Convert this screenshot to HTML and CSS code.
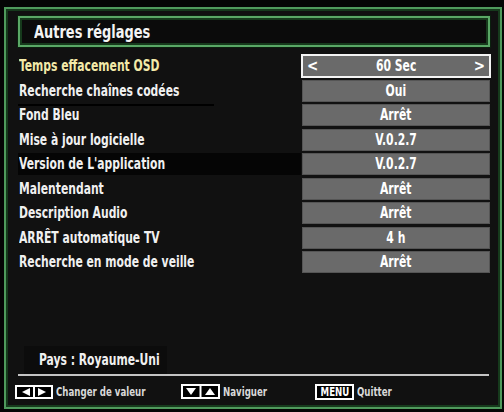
FILE: index.html
```html
<!DOCTYPE html>
<html lang="fr">
<head>
    <meta charset="UTF-8">
    <meta name="viewport" content="width=device-width, initial-scale=1.0">
    <title>Autres réglages</title>
    <link rel="stylesheet" href="styles.css">
</head>
<body>

    <div class="frame">
        <div class="titlebox">
            <h1><span class="sq">Autres réglages</span></h1>
        </div>

        <div class="menu">
            <div class="row active">
                <span class="label"><span class="sq">Temps effacement OSD</span></span>
                <span class="value"><span class="arrow">&lt;</span><span class="sq mid">60 Sec</span><span class="arrow">&gt;</span></span>
            </div>
            <div class="row underline">
                <span class="label"><span class="sq">Recherche chaînes codées</span></span>
                <span class="value"><span class="sq mid">Oui</span></span>
            </div>
            <div class="row">
                <span class="label"><span class="sq">Fond Bleu</span></span>
                <span class="value"><span class="sq mid">Arrêt</span></span>
            </div>
            <div class="row">
                <span class="label"><span class="sq">Mise à jour logicielle</span></span>
                <span class="value"><span class="sq mid">V.0.2.7</span></span>
            </div>
            <div class="row band">
                <span class="label"><span class="sq">Version de L'application</span></span>
                <span class="value"><span class="sq mid">V.0.2.7</span></span>
            </div>
            <div class="row">
                <span class="label"><span class="sq">Malentendant</span></span>
                <span class="value"><span class="sq mid">Arrêt</span></span>
            </div>
            <div class="row">
                <span class="label"><span class="sq">Description Audio</span></span>
                <span class="value"><span class="sq mid">Arrêt</span></span>
            </div>
            <div class="row">
                <span class="label"><span class="sq">ARRÊT automatique TV</span></span>
                <span class="value"><span class="sq mid">4 h</span></span>
            </div>
            <div class="row">
                <span class="label"><span class="sq">Recherche en mode de veille</span></span>
                <span class="value"><span class="sq mid">Arrêt</span></span>
            </div>
        </div>

        <div class="spacer"></div>

        <div class="pays"><span class="sq">Pays : Royaume-Uni</span></div>
        <div class="rule"></div>

        <div class="footer">
            <div class="hint change">
                <svg width="38" height="14" viewBox="0 0 38 14">
                    <rect x="1" y="1" width="36" height="12" fill="#000" stroke="#fff" stroke-width="2"/>
                    <line x1="19" y1="1" x2="19" y2="13" stroke="#fff" stroke-width="2"/>
                    <polygon points="15,3 15,11 7,7" fill="#fff"/>
                    <polygon points="23,3 23,11 31,7" fill="#fff"/>
                </svg>
                <span class="sq">Changer de valeur</span>
            </div>
            <div class="hint nav">
                <svg width="39" height="15" viewBox="0 0 39 15">
                    <rect x="1" y="1" width="37" height="13" fill="#000" stroke="#fff" stroke-width="2"/>
                    <line x1="19.5" y1="1" x2="19.5" y2="14" stroke="#fff" stroke-width="2"/>
                    <polygon points="5,4 15,4 10,11" fill="#fff"/>
                    <polygon points="24,11 34,11 29,4" fill="#fff"/>
                </svg>
                <span class="sq">Naviguer</span>
            </div>
            <div class="hint quit">
                <span class="menukey"><span class="sq mid">MENU</span></span>
                <span class="sq">Quitter</span>
            </div>
        </div>
    </div>

</body>
</html>
```

FILE: styles.css
```css
html,body{
    margin: 0;
    width: 504px;
    height: 412px;
    background-color: #050505;
    overflow: hidden;
}
body{
    font-family: "DejaVu Sans Condensed", "DejaVu Sans", sans-serif;
    font-weight: bold;
    color: #f0f0f0;
}
/* the OSD font is narrow, squeeze the glyphs horizontally */
.sq{
    display: inline-block;
    white-space: nowrap;
    transform: scaleX(0.8);
    transform-origin: left center;
}
.sq.mid{
    transform-origin: center center;
}
.frame{
    box-sizing: border-box;
    margin: 7px 2px 0 4px;
    height: 402px;
    border: 2px solid #4f9a5c;
    box-shadow: inset 0 0 0 2px #163a1c;
    background-color: #111111;
    padding: 7px 10px 0 12px;
    display: flex;
    flex-direction: column;
}
.titlebox{
    box-sizing: border-box;
    height: 31px;
    border: 2px solid #5aa866;
    box-shadow: inset 0 0 0 2px #163a1c, 0 0 0 1px #0b200e;
    background-color: #0b0b0b;
    display: flex;
    align-items: center;
    padding-left: 14px;
}
.titlebox h1{
    margin: 0;
    font-size: 18px;
    font-weight: bold;
    color: #f4f4f4;
}
.menu{
    margin-top: 8px;
    display: flex;
    flex-direction: column;
    gap: 2.5px;
}
.row{
    height: 22px;
    display: flex;
    align-items: center;
    font-size: 15px;
}
.label{
    flex: 1;
    min-width: 0;
    padding-left: 1px;
    height: 100%;
    display: flex;
    align-items: center;
}
.row.active .label{
    color: #f3eaa9;
}
.row.underline .label{
    box-shadow: inset 0 -2px 0 #000;
    margin-right: 87px;
    height: 26px;
    margin-bottom: -4px;
    align-items: flex-start;
    padding-top: 2px;
    box-sizing: border-box;
}
.row.band .label{
    background-color: #050505;
}
.value{
    box-sizing: border-box;
    flex-shrink: 0;
    width: 188px;
    height: 22px;
    margin-left: 1px;
    background-color: #6a6a6a;
    border: 1px solid #555;
    color: #ffffff;
    display: flex;
    align-items: center;
    justify-content: center;
}
.row.active .value{
    outline: 2px solid #f4f4f4;
    outline-offset: -1px;
    justify-content: space-between;
    padding: 0 4px;
}
.arrow{
    font-size: 15px;
}
.spacer{
    flex: 1;
}
.pays{
    width: 128px;
    margin-left: 6px;
    padding: 5px 0 5px 15px;
    background-color: #0c0c0c;
    font-size: 15px;
}
.rule{
    height: 2px;
    margin-right: 1px;
    background-color: #c4c4c4;
}
.footer{
    height: 31px;
    margin-left: -3px;
    display: flex;
    align-items: center;
    font-size: 12px;
    color: #d8d8d8;
}
.hint{
    display: flex;
    align-items: center;
    gap: 3px;
}
.change{
    width: 166px;
}
.nav{
    width: 134px;
}
.menukey{
    box-sizing: border-box;
    width: 39px;
    height: 16px;
    border: 2px solid #ffffff;
    background-color: #000;
    color: #ffffff;
    font-size: 12px;
    display: flex;
    align-items: center;
    justify-content: center;
}
```
